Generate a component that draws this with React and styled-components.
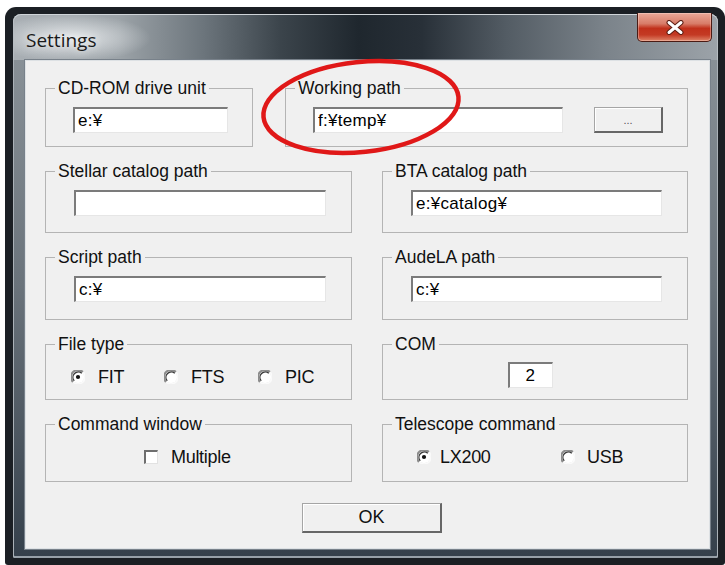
import styled, { createGlobalStyle } from "styled-components";

const GlobalStyle = createGlobalStyle`
  html, body {
    margin: 0;
    padding: 0;
    background: #fff;
  }
  body {
    width: 725px;
    height: 565px;
    overflow: hidden;
    font-family: "Liberation Sans", Arial, sans-serif;
  }
`;

const Page = styled.div`
  position: relative;
  width: 725px;
  height: 565px;
  padding: 7px 0 0 5px;
  box-sizing: border-box;
`;

const Frame = styled.div`
  width: 720px;
  height: 558px;
  box-sizing: border-box;
  padding: 7px 7px 7px 8px;
  background: #1b1f24;
  border-radius: 11px 11px 3px 3px;
`;

const Glass = styled.div`
  height: 100%;
  box-sizing: border-box;
  display: flex;
  flex-direction: column;
  padding: 0 8px 9px 12px;
  border-radius: 8px 8px 2px 2px;
  background: linear-gradient(180deg, #8e969c 0%, #6a737b 50%, #35404b 100%);
  box-shadow: inset 1px 0 0 #aab1b7, inset -1px 0 0 #aab1b7, inset 0 -2px 0 #97a0a8;
`;

const TitleBar = styled.div`
  height: 46px;
  margin: 0 -8px 0 -12px;
  padding: 0 6px 0 13px;
  display: flex;
  justify-content: space-between;
  align-items: flex-start;
  border-radius: 8px 8px 0 0;
  background:
    radial-gradient(ellipse 80px 24px at 58px 24px, rgba(236, 239, 241, 0.9), rgba(236, 239, 241, 0)),
    linear-gradient(90deg, #a9afb4 0%, #9ca3a8 15%, #6c757c 27%, #3b444b 38%, #1f272e 49%, #283038 58%, #535c64 70%, #7b838a 84%, #9ca3a9 100%);
  box-shadow: inset 0 1px 0 #cfd4d8, inset 1px 0 0 #b7bdc2, inset -1px 0 0 #b7bdc2;
`;

const Title = styled.div`
  margin-top: 14px;
  font-family: "Open Sans", "Liberation Sans", sans-serif;
  font-size: 19px;
  line-height: 24px;
  color: #1a1a1a;
  text-shadow: 0 0 8px rgba(255, 255, 255, 0.9);
`;

const CloseButton = styled.div`
  width: 75px;
  height: 29px;
  margin-top: -1px;
  box-sizing: border-box;
  display: flex;
  align-items: center;
  justify-content: center;
  border: 1px solid #4a1b14;
  border-top: none;
  border-radius: 0 0 5px 5px;
  background: linear-gradient(180deg, #eaa999 0%, #d87c68 38%, #c1301b 55%, #c43a24 78%, #df8468 100%);
  box-shadow: inset 0 0 0 1px rgba(255, 235, 225, 0.35);
`;

const Client = styled.div`
  flex: 1;
  display: flex;
  flex-direction: column;
  padding: 17px 21px 0 19px;
  background: #f0f0f0;
  border: 1px solid #dde1e4;
  box-shadow: 0 0 0 1px #78818a;
  color: #111;
`;

const Rows = styled.div`
  display: grid;
  grid-template-columns: 307px 306px;
  grid-template-rows: 69px 72px 73px 66px 68px;
  column-gap: 30px;
  row-gap: 14px;
`;

const WideRow = styled.div`
  grid-column: 1 / -1;
  display: grid;
  grid-template-columns: 208px 1fr;
  column-gap: 32px;
`;

const Group = styled.fieldset`
  margin: 0;
  min-width: 0;
  height: 100%;
  box-sizing: border-box;
  padding: 0;
  border: 1px solid #b4b4b4;
`;

const Legend = styled.legend`
  margin-left: 9px;
  padding: 0 3px;
  font-size: 17.5px;
  line-height: 20px;
  white-space: nowrap;
  color: #111;
`;

const Field = styled.div`
  display: flex;
  align-items: center;
  gap: 31px;
  margin-top: 9px;
  padding: ${(p) => p.$pad || "0 25px 0 28px"};
`;

const TextBox = styled.input`
  box-sizing: border-box;
  width: ${(p) => p.$w || "100%"};
  height: 26px;
  padding: 0 3px;
  font-family: "Liberation Sans", Arial, sans-serif;
  font-size: 17px;
  letter-spacing: 0.3px;
  color: #000;
  text-align: ${(p) => p.$align || "left"};
  background: #fff;
  border-style: solid;
  border-width: 2px 1px 1px 2px;
  border-color: #7b7b7b #e6e6e6 #e6e6e6 #7b7b7b;
  outline: none;
`;

const Button = styled.button`
  box-sizing: border-box;
  width: ${(p) => p.$w};
  height: ${(p) => p.$h};
  padding: 0;
  font-family: "Liberation Sans", Arial, sans-serif;
  font-size: ${(p) => p.$size || "18px"};
  color: ${(p) => p.$color || "#111"};
  background: #f0f0f0;
  border-style: solid;
  border-width: 1px 2px 2px 1px;
  border-color: #a5a5a5 #666 #666 #a5a5a5;
  box-shadow: inset 1px 1px 0 #fff;
`;

const Center = styled.div`
  display: flex;
  justify-content: center;
  margin-top: 8px;
  padding-right: ${(p) => p.$pr || "0"};
`;

const OptionRow = styled.div`
  display: flex;
  align-items: center;
  height: 20px;
  margin-top: 13px;
  padding-left: ${(p) => p.$pl};
`;

const Option = styled.label`
  display: flex;
  align-items: center;
  gap: ${(p) => p.$gap || "13px"};
  width: ${(p) => p.$w || "auto"};
  font-size: 18px;
  letter-spacing: -0.3px;
  color: #111;

  svg {
    flex-shrink: 0;
  }
`;

const Check = styled.span`
  flex-shrink: 0;
  width: 14px;
  height: 14px;
  box-sizing: border-box;
  background: #fff;
  border-style: solid;
  border-width: 2px 1px 1px 2px;
  border-color: #6e6e6e #e2e2e2 #e2e2e2 #6e6e6e;
`;

const Footer = styled.div`
  display: flex;
  justify-content: center;
  margin-top: 21px;
  padding-left: 11px;
`;

const Overlay = styled.svg`
  position: absolute;
  left: 0;
  top: 0;
  pointer-events: none;
`;

// sunken classic radio: dark arc top-left, light arc bottom-right
function RadioMark({ on }) {
  return (
    <svg width="14" height="14" viewBox="0 0 14 14">
      <circle cx="7" cy="7" r="6" fill="#fff" />
      <path d="M2.05 11.95 A7 7 0 0 1 11.95 2.05" fill="none" stroke="#8c8c8c" strokeWidth="2" />
      <path d="M3.2 10.8 A5.4 5.4 0 0 1 10.8 3.2" fill="none" stroke="#3a3a3a" strokeWidth="1.3" />
      <path d="M11.95 2.05 A7 7 0 0 1 2.05 11.95" fill="none" stroke="#fafafa" strokeWidth="1.6" />
      {on && <circle cx="7" cy="7" r="2.1" fill="#111" />}
    </svg>
  );
}

function CloseGlyph() {
  return (
    <svg width="18" height="15" viewBox="0 0 18 15">
      <path d="M3 2.5 L15 12.5 M15 2.5 L3 12.5" stroke="#5b1d12" strokeWidth="5" strokeLinecap="round" />
      <path d="M3 2.5 L15 12.5 M15 2.5 L3 12.5" stroke="#fff" strokeWidth="3" strokeLinecap="round" />
    </svg>
  );
}

function PathGroup({ label, value }) {
  return (
    <Group>
      <Legend>{label}</Legend>
      <Field>
        <TextBox readOnly value={value} />
      </Field>
    </Group>
  );
}

export default function App() {
  return (
    <Page>
      <GlobalStyle />
      <Frame>
        <Glass>
          <TitleBar>
            <Title>Settings</Title>
            <CloseButton>
              <CloseGlyph />
            </CloseButton>
          </TitleBar>
          <Client>
            <Rows>
              <WideRow>
                <Group>
                  <Legend>CD-ROM drive unit</Legend>
                  <Field $pad="0 24px 0 27px">
                    <TextBox readOnly value="e:¥" />
                  </Field>
                </Group>
                <Group>
                  <Legend>Working path</Legend>
                  <Field $pad="0 0 0 27px">
                    <TextBox readOnly value="f:¥temp¥" $w="250px" />
                    <Button $w="69px" $h="26px" $size="11px" $color="#555">...</Button>
                  </Field>
                </Group>
              </WideRow>

              <PathGroup label="Stellar catalog path" value="" />
              <PathGroup label="BTA catalog path" value="e:¥catalog¥" />
              <PathGroup label="Script path" value="c:¥" />
              <PathGroup label="AudeLA path" value="c:¥" />

              <Group>
                <Legend>File type</Legend>
                <OptionRow $pl="25px">
                  <Option $w="93px">
                    <RadioMark on />
                    FIT
                  </Option>
                  <Option $w="94px">
                    <RadioMark />
                    FTS
                  </Option>
                  <Option>
                    <RadioMark />
                    PIC
                  </Option>
                </OptionRow>
              </Group>
              <Group>
                <Legend>COM</Legend>
                <Center $pr="10px">
                  <TextBox readOnly value="2" $w="45px" $align="center" />
                </Center>
              </Group>

              <Group>
                <Legend>Command window</Legend>
                <OptionRow $pl="98px">
                  <Option>
                    <Check />
                    Multiple
                  </Option>
                </OptionRow>
              </Group>
              <Group>
                <Legend>Telescope command</Legend>
                <OptionRow $pl="34px">
                  <Option $w="144px" $gap="9px">
                    <RadioMark on />
                    LX200
                  </Option>
                  <Option $gap="12px">
                    <RadioMark />
                    USB
                  </Option>
                </OptionRow>
              </Group>
            </Rows>
            <Footer>
              <Button $w="140px" $h="30px">OK</Button>
            </Footer>
          </Client>
        </Glass>
      </Frame>
      <Overlay width="725" height="565">
        <ellipse
          cx="361"
          cy="107"
          rx="98"
          ry="45"
          transform="rotate(-6 361 107)"
          fill="none"
          stroke="#e01818"
          strokeWidth="4.5"
        />
      </Overlay>
    </Page>
  );
}
